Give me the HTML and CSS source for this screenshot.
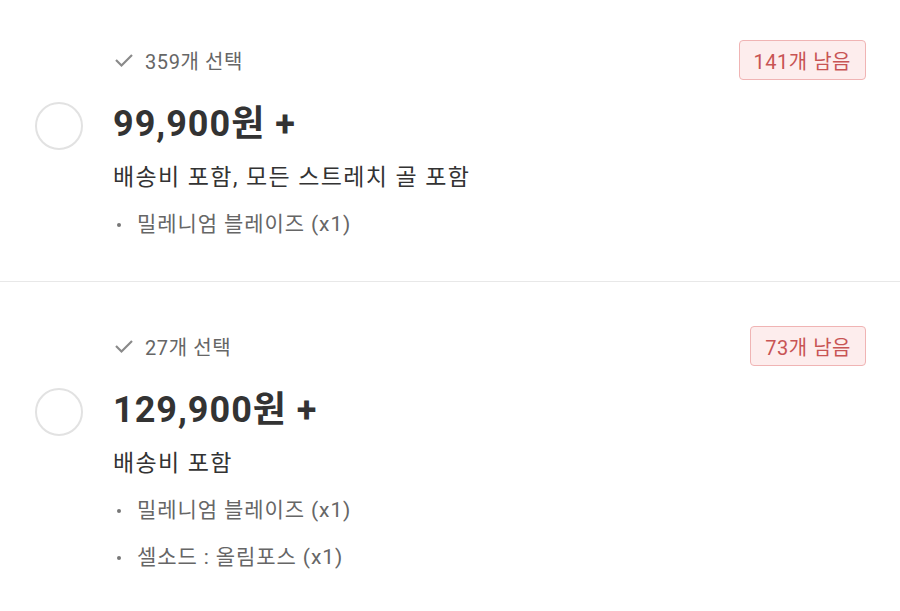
FILE: index.html
```html
<!DOCTYPE html>
<html lang="ko">
<head>
<meta charset="UTF-8">
<meta name="viewport" content="width=device-width, initial-scale=1.0">
<title>리워드 선택</title>
<link rel="stylesheet" href="styles.css">
</head>
<body>

<div class="reward-list">
    <div class="reward">
        <div class="reward-head">
            <div class="selected">
                <svg class="check" width="20" height="16" viewBox="0 0 20 16">
                    <path d="M2 8 L7.5 13.5 L18 3" fill="none" stroke="#8a8a8a" stroke-width="2.2"/>
                </svg>
                <span>359개 선택</span>
            </div>
            <span class="badge">141개 남음</span>
        </div>
        <div class="radio"></div>
        <div class="price">99,900원 +</div>
        <div class="desc">배송비 포함, 모든 스트레치 골 포함</div>
        <ul class="items">
            <li>밀레니엄 블레이즈 (x1)</li>
        </ul>
    </div>

    <div class="reward">
        <div class="reward-head">
            <div class="selected">
                <svg class="check" width="20" height="16" viewBox="0 0 20 16">
                    <path d="M2 8 L7.5 13.5 L18 3" fill="none" stroke="#8a8a8a" stroke-width="2.2"/>
                </svg>
                <span>27개 선택</span>
            </div>
            <span class="badge">73개 남음</span>
        </div>
        <div class="radio"></div>
        <div class="price">129,900원 +</div>
        <div class="desc">배송비 포함</div>
        <ul class="items">
            <li>밀레니엄 블레이즈 (x1)</li>
            <li>셀소드 : 올림포스 (x1)</li>
        </ul>
    </div>
</div>

</body>
</html>
```

FILE: styles.css
```css
body {
    margin: 0;
    padding: 0;
    background: #fff;
    font-family: Roboto, "Noto Sans CJK KR", sans-serif;
    color: #333;
}
.reward {
    display: grid;
    grid-template-columns: 48px 1fr;
    column-gap: 30px;
    padding: 44px 34px 42px 35px;
    border-bottom: 1px solid #e8e8e8;
}
.reward:first-child {
    padding-top: 40px;
}
.reward:last-child {
    border-bottom: none;
}
.reward-head {
    grid-column: 2;
    display: flex;
    justify-content: space-between;
    align-items: center;
    height: 40px;
}
.selected {
    display: flex;
    align-items: center;
    gap: 11px;
    font-size: 20px;
    letter-spacing: 0.6px;
    color: #666;
}
.check {
    margin-left: 1px;
}
.badge {
    display: flex;
    align-items: center;
    height: 38px;
    padding: 0 14px;
    border: 1px solid #f0b4b4;
    border-radius: 4px;
    background: #fdeded;
    color: #c85454;
    font-size: 20px;
    letter-spacing: 0.5px;
}
.radio {
    grid-column: 1;
    grid-row: 2;
    width: 44px;
    height: 44px;
    margin-top: 22px;
    border: 2px solid #e2e2e2;
    border-radius: 50%;
}
.price {
    grid-column: 2;
    grid-row: 2;
    margin-top: 20px;
    font-size: 36px;
    font-weight: bold;
    line-height: 48px;
    letter-spacing: 1px;
    color: #333;
}
.desc {
    grid-column: 2;
    margin-top: 12px;
    font-size: 23px;
    line-height: 32px;
    letter-spacing: 1.4px;
    color: #333;
}
.items {
    grid-column: 2;
    list-style: none;
    margin: 15px 0 0;
    padding: 0;
    display: flex;
    flex-direction: column;
    gap: 17px;
}
.items li {
    position: relative;
    padding-left: 24px;
    font-size: 21px;
    line-height: 30px;
    letter-spacing: 0.9px;
    color: #666;
}
.items li::before {
    content: "";
    position: absolute;
    left: 4px;
    top: 14px;
    width: 4px;
    height: 4px;
    border-radius: 50%;
    background: #777;
}
```
